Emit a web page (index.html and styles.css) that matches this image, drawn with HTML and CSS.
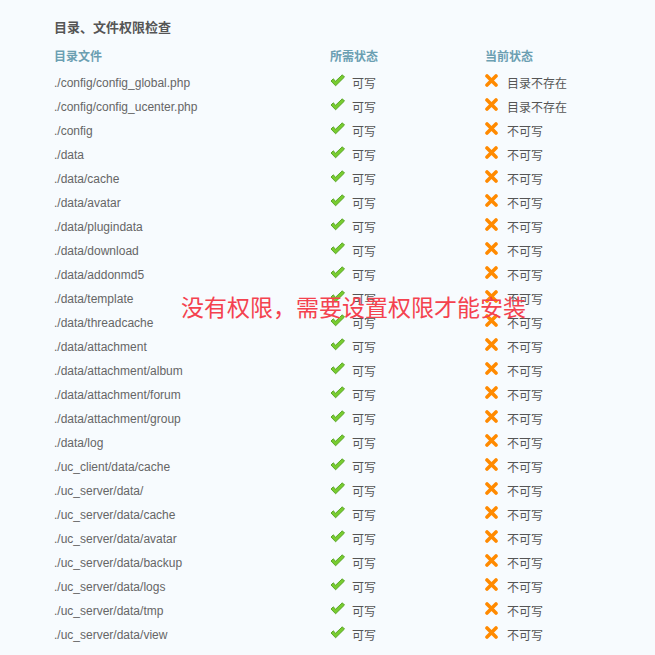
FILE: index.html
```html
<!DOCTYPE html>
<html>
<head>
<meta charset="utf-8">
<link rel="stylesheet" href="styles.css">
</head>
<body>
<div class="page">
  <h2 class="title">目录、文件权限检查</h2>
  <table class="tb">
    <thead>
      <tr><th class="c1">目录文件</th><th class="c2">所需状态</th><th class="c3">当前状态</th></tr>
    </thead>
    <tbody>
      <tr><td>./config/config_global.php</td><td><span class="ok"></span>可写</td><td><span class="no"></span>目录不存在</td></tr>
      <tr><td>./config/config_ucenter.php</td><td><span class="ok"></span>可写</td><td><span class="no"></span>目录不存在</td></tr>
      <tr><td>./config</td><td><span class="ok"></span>可写</td><td><span class="no"></span>不可写</td></tr>
      <tr><td>./data</td><td><span class="ok"></span>可写</td><td><span class="no"></span>不可写</td></tr>
      <tr><td>./data/cache</td><td><span class="ok"></span>可写</td><td><span class="no"></span>不可写</td></tr>
      <tr><td>./data/avatar</td><td><span class="ok"></span>可写</td><td><span class="no"></span>不可写</td></tr>
      <tr><td>./data/plugindata</td><td><span class="ok"></span>可写</td><td><span class="no"></span>不可写</td></tr>
      <tr><td>./data/download</td><td><span class="ok"></span>可写</td><td><span class="no"></span>不可写</td></tr>
      <tr><td>./data/addonmd5</td><td><span class="ok"></span>可写</td><td><span class="no"></span>不可写</td></tr>
      <tr><td>./data/template</td><td><span class="ok"></span>可写</td><td><span class="no"></span>不可写</td></tr>
      <tr><td>./data/threadcache</td><td><span class="ok"></span>可写</td><td><span class="no"></span>不可写</td></tr>
      <tr><td>./data/attachment</td><td><span class="ok"></span>可写</td><td><span class="no"></span>不可写</td></tr>
      <tr><td>./data/attachment/album</td><td><span class="ok"></span>可写</td><td><span class="no"></span>不可写</td></tr>
      <tr><td>./data/attachment/forum</td><td><span class="ok"></span>可写</td><td><span class="no"></span>不可写</td></tr>
      <tr><td>./data/attachment/group</td><td><span class="ok"></span>可写</td><td><span class="no"></span>不可写</td></tr>
      <tr><td>./data/log</td><td><span class="ok"></span>可写</td><td><span class="no"></span>不可写</td></tr>
      <tr><td>./uc_client/data/cache</td><td><span class="ok"></span>可写</td><td><span class="no"></span>不可写</td></tr>
      <tr><td>./uc_server/data/</td><td><span class="ok"></span>可写</td><td><span class="no"></span>不可写</td></tr>
      <tr><td>./uc_server/data/cache</td><td><span class="ok"></span>可写</td><td><span class="no"></span>不可写</td></tr>
      <tr><td>./uc_server/data/avatar</td><td><span class="ok"></span>可写</td><td><span class="no"></span>不可写</td></tr>
      <tr><td>./uc_server/data/backup</td><td><span class="ok"></span>可写</td><td><span class="no"></span>不可写</td></tr>
      <tr><td>./uc_server/data/logs</td><td><span class="ok"></span>可写</td><td><span class="no"></span>不可写</td></tr>
      <tr><td>./uc_server/data/tmp</td><td><span class="ok"></span>可写</td><td><span class="no"></span>不可写</td></tr>
      <tr><td>./uc_server/data/view</td><td><span class="ok"></span>可写</td><td><span class="no"></span>不可写</td></tr>
    </tbody>
  </table>
  <div class="overlay">没有权限，需要设置权限才能安装</div>
</div>
</body>
</html>
```

FILE: styles.css
```css
html, body {
  margin: 0;
  padding: 0;
  background: #f7fbfe;
}
body {
  font-family: "Liberation Sans", Arial, "Noto Sans CJK SC", sans-serif;
  font-size: 12px;
  color: #666;
}
.page {
  position: relative;
  padding: 18px 0 0 54px;
}
.title {
  margin: 0 0 10px 0;
  font-size: 13px;
  line-height: 18px;
  font-weight: bold;
  color: #555;
  font-family: "Noto Sans CJK SC", sans-serif;
}
.tb {
  border-collapse: collapse;
}
.tb th {
  text-align: left;
  font-weight: bold;
  color: #6b9fb2;
  font-size: 12px;
  height: 20px;
  line-height: 20px;
  padding: 0 0 5px 0;
  font-family: "Noto Sans CJK SC", sans-serif;
  vertical-align: top;
}
.tb td {
  height: 24px;
  line-height: 24px;
  padding: 0;
  white-space: nowrap;
  vertical-align: middle;
}
.tb td:first-child { color: #666; }
.tb td:nth-child(2), .tb td:nth-child(3) {
  color: #555;
  font-family: "Noto Sans CJK SC", sans-serif;
}
.c1 { width: 276px; }
.c2 { width: 155px; }
.c3 { width: 120px; }
.ok, .no {
  display: inline-block;
  width: 15px;
  height: 13px;
  margin-right: 7px;
  vertical-align: 1px;
  background-repeat: no-repeat;
}
.ok {
  background-image: url("data:image/svg+xml;utf8,<svg xmlns='http://www.w3.org/2000/svg' width='15' height='13' viewBox='0 0 15 13'><path d='M1 7 L3.2 4.8 L5.6 7.2 L12.3 0.8 L14.5 3 L5.6 11.8 Z' fill='%2378cc30' stroke='%23529f20' stroke-width='0.9' stroke-linejoin='round'/></svg>");
}
.no {
  width: 13px;
  margin-right: 9px;
  background-image: url("data:image/svg+xml;utf8,<svg xmlns='http://www.w3.org/2000/svg' width='13' height='13' viewBox='0 0 13 13'><path d='M2 2 L11 11 M11 2 L2 11' stroke='%23ff8a00' stroke-width='3.6' stroke-linecap='round'/></svg>");
}
.overlay {
  position: absolute;
  left: 181px;
  top: 291px;
  font-family: "Noto Sans CJK SC", sans-serif;
  font-size: 23px;
  line-height: 30px;
  color: #f4424f;
  white-space: nowrap;
}
```
